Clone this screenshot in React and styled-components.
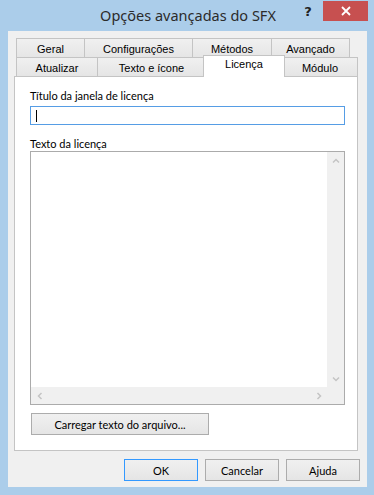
import React from 'react';
import styled, { createGlobalStyle } from 'styled-components';

const GlobalStyle = createGlobalStyle`
  * { box-sizing: border-box; }
  html, body { margin: 0; padding: 0; background: #ffffff; }
`;

const topTabs = [
  { label: 'Geral', width: 69 },
  { label: 'Configurações', width: 109 },
  { label: 'Métodos', width: 80 },
  { label: 'Avançado', width: 79 },
];

const bottomTabs = [
  { label: 'Atualizar', width: 82 },
  { label: 'Texto e ícone', width: 109 },
  { label: 'Licença', width: 82, active: true },
  { label: 'Módulo', width: 76 },
];

function Chevron({ dir }) {
  const paths = {
    up: 'M1 4.5 L4 1.5 L7 4.5',
    down: 'M1 1.5 L4 4.5 L7 1.5',
    left: 'M4.5 1 L1.5 4 L4.5 7',
    right: 'M1.5 1 L4.5 4 L1.5 7',
  };
  const horiz = dir === 'left' || dir === 'right';
  return (
    <svg width={horiz ? 6 : 8} height={horiz ? 8 : 6} viewBox={horiz ? '0 0 6 8' : '0 0 8 6'}>
      <path d={paths[dir]} fill="none" stroke="#c4c4c4" strokeWidth="1.5" />
    </svg>
  );
}

export default function App() {
  return (
    <>
      <GlobalStyle />
      <Window>
        <TitleBar>
          <span />
          <Title>Opções avançadas do SFX</Title>
          <Controls>
            <HelpButton>?</HelpButton>
            <CloseButton>
              <svg width="10" height="10" viewBox="0 0 10 10">
                <path d="M1 1 L9 9 M9 1 L1 9" stroke="#ffffff" strokeWidth="1.8" />
              </svg>
            </CloseButton>
          </Controls>
        </TitleBar>
        <Client>
          <TabStrip>
            <TabRow>
              {topTabs.map((t) => (
                <Tab key={t.label} style={{ width: t.width }}>{t.label}</Tab>
              ))}
            </TabRow>
            <TabRow $front>
              {bottomTabs.map((t) => (
                <Tab key={t.label} $active={t.active} style={{ width: t.width }}>
                  {t.label}
                </Tab>
              ))}
            </TabRow>
          </TabStrip>
          <Panel>
            <Label>Título da janela de licença</Label>
            <Input>
              <Caret />
            </Input>
            <Label $gap={12} $line={14}>Texto da licença</Label>
            <TextArea>
              <TextBody />
              <VScroll>
                <ArrowBox><Chevron dir="up" /></ArrowBox>
                <ArrowBox><Chevron dir="down" /></ArrowBox>
              </VScroll>
              <HScroll>
                <ArrowBox><Chevron dir="left" /></ArrowBox>
                <ArrowBox><Chevron dir="right" /></ArrowBox>
              </HScroll>
              <Corner />
            </TextArea>
            <LoadButton>Carregar texto do arquivo...</LoadButton>
          </Panel>
          <ButtonRow>
            <DialogButton $default>OK</DialogButton>
            <DialogButton>Cancelar</DialogButton>
            <DialogButton>Ajuda</DialogButton>
          </ButtonRow>
        </Client>
      </Window>
    </>
  );
}

const Window = styled.div`
  width: 374px;
  height: 495px;
  background: #abcdea;
  display: flex;
  flex-direction: column;
  padding: 0 7px 8px 8px;
`;

const TitleBar = styled.div`
  height: 31px;
  display: grid;
  grid-template-columns: 1fr auto 1fr;
  align-items: start;
  margin-right: -1px;
`;

const Title = styled.div`
  font-family: 'Noto Sans', sans-serif;
  font-size: 14.5px;
  color: #2b2b2b;
  line-height: 20px;
  padding-top: 5px;
`;

const Controls = styled.div`
  display: flex;
  justify-content: flex-end;
  align-items: flex-start;
`;

const HelpButton = styled.div`
  font-family: 'DejaVu Sans', sans-serif;
  font-weight: bold;
  font-size: 13px;
  color: #222;
  width: 26px;
  text-align: center;
  padding-top: 4px;
  margin-right: 2px;
`;

const CloseButton = styled.div`
  width: 45px;
  height: 20px;
  margin-top: 1px;
  background: #c75050;
  display: flex;
  align-items: center;
  justify-content: center;
`;

const Client = styled.div`
  flex: 1;
  background: #f0f0f0;
  display: flex;
  flex-direction: column;
  padding: 7px 0 0 6px;
`;

const TabStrip = styled.div`
  display: flex;
  flex-direction: column;
  font-family: 'Liberation Sans', Arial, sans-serif;
  font-size: 11px;
  color: #000;
`;

const TabRow = styled.div`
  display: flex;
  padding-left: 3px;
  height: ${(p) => (p.$front ? 19 : 20)}px;
  margin-top: ${(p) => (p.$front ? -1 : 0)}px;
`;

const Tab = styled.div`
  flex: none;
  height: 100%;
  border: 1px solid #c4c4c4;
  border-bottom: none;
  margin-left: -1px;
  background: linear-gradient(#f0f0f0, #e5e5e5);
  display: flex;
  align-items: center;
  justify-content: center;
  padding-top: 1px;

  ${(p) =>
    p.$active &&
    `
    position: relative;
    z-index: 2;
    background: #ffffff;
    height: calc(100% + 3px);
    margin-top: -2px;
    margin-left: -3px;
    margin-right: -2px;
    align-items: flex-start;
    padding-top: 2px;
  `}
`;

const Panel = styled.div`
  width: 344px;
  height: 375px;
  background: #ffffff;
  border: 1px solid #c4c4c4;
  display: flex;
  flex-direction: column;
  align-items: flex-start;
  padding: 0 12px 0 15px;
`;

const Label = styled.div`
  font-family: Lato, 'Noto Sans', sans-serif;
  font-size: 11px;
  color: #000;
  line-height: ${(p) => p.$line ?? 16}px;
  margin-top: ${(p) => p.$gap ?? 11}px;
  margin-bottom: ${(p) => (p.$line ? 0 : 2)}px;
`;

const Input = styled.div`
  width: 100%;
  height: 19px;
  border: 1px solid #569de5;
  display: flex;
  align-items: center;
  padding-left: 5px;
`;

const Caret = styled.div`
  width: 1px;
  height: 12px;
  background: #000;
`;

const TextArea = styled.div`
  width: 100%;
  height: 254px;
  border: 1px solid #ababab;
  display: grid;
  grid-template-columns: 1fr 17px;
  grid-template-rows: 1fr 17px;
`;

const TextBody = styled.div`
  background: #ffffff;
`;

const VScroll = styled.div`
  background: #f0f0f0;
  display: flex;
  flex-direction: column;
  justify-content: space-between;
`;

const HScroll = styled.div`
  background: #f0f0f0;
  display: flex;
  justify-content: space-between;
`;

const Corner = styled.div`
  background: #f0f0f0;
`;

const ArrowBox = styled.div`
  width: 17px;
  height: 17px;
  display: flex;
  align-items: center;
  justify-content: center;
`;

const LoadButton = styled.div`
  margin-top: 8px;
  margin-left: 1px;
  width: 178px;
  height: 22px;
  border: 1px solid #acacac;
  background: linear-gradient(#f0f0f0, #e5e5e5);
  font-family: Lato, 'Noto Sans', sans-serif;
  font-size: 11px;
  display: flex;
  align-items: center;
  justify-content: center;
`;

const ButtonRow = styled.div`
  display: flex;
  justify-content: flex-end;
  gap: 7px;
  margin-top: 8px;
  padding-right: 7px;
`;

const DialogButton = styled.div`
  width: 74px;
  height: 22px;
  border: 1px solid ${(p) => (p.$default ? '#3399ff' : '#acacac')};
  background: linear-gradient(#f0f0f0, #e5e5e5);
  font-family: Lato, 'Noto Sans', sans-serif;
  font-size: 11px;
  display: flex;
  align-items: center;
  justify-content: center;
`;
